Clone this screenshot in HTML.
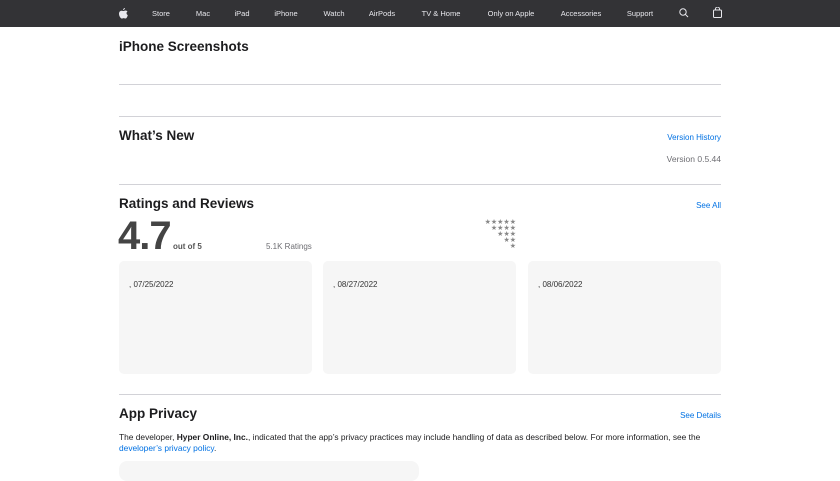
<!DOCTYPE html><html><head><style>
body{margin:0;width:840px;height:472px;overflow:hidden;background:#fff;font-family:"Liberation Sans",sans-serif;position:relative;color:#1d1d1f}
.a{position:absolute;white-space:nowrap}
.nav{position:absolute;left:0;top:0;width:840px;height:27px;background:#333336}
.n{position:absolute;top:9px;font-size:7.5px;color:#e8e8ed;transform:translateX(-50%)}
.hr{position:absolute;left:119px;width:602px;height:1px;background:#d2d2d7}
h2{position:absolute;margin:0;font-size:13.5px;font-weight:bold;left:119px}
.lk{color:#0071e3;font-size:8px}
.card{position:absolute;top:261px;width:193px;height:113px;background:#f6f6f6;border-radius:5px}
.card span{position:absolute;left:10px;top:19px;font-size:8px;color:#333}
</style></head><body>
<div class="nav">
<svg class="a" style="left:119px;top:8px" width="9" height="11" viewBox="0 0 9 11"><path d="M6 0c0 1-1 2-2 2 0-1 1-2 2-2zM4.5 3c.7 0 1.3-.5 2-.5s1.6.4 2 1c-1.5.9-1.2 3 .3 3.6C8.4 8.5 7.6 10.5 6.5 10.5c-.7 0-1-.4-1.8-.4s-1.1.4-1.8.4C1.6 10.5 0 8 0 5.7 0 3.8 1.2 2.7 2.4 2.7c.8 0 1.4.3 2.1.3z" fill="#e8e8ed"/></svg>
<span class="n" style="left:161px">Store</span><span class="n" style="left:203px">Mac</span><span class="n" style="left:242px">iPad</span><span class="n" style="left:286px">iPhone</span><span class="n" style="left:334px">Watch</span><span class="n" style="left:382px">AirPods</span><span class="n" style="left:441px">TV &amp; Home</span><span class="n" style="left:511px">Only on Apple</span><span class="n" style="left:581px">Accessories</span><span class="n" style="left:640px">Support</span>
<svg class="a" style="left:679px;top:8px" width="10" height="10" viewBox="0 0 10 10"><circle cx="4" cy="4" r="3.2" fill="none" stroke="#e8e8ed" stroke-width="1"/><path d="M6.3 6.3L9 9" stroke="#e8e8ed" stroke-width="1"/></svg>
<svg class="a" style="left:713px;top:7px" width="9" height="11" viewBox="0 0 9 11"><rect x=".5" y="3" width="8" height="7.5" rx="1" fill="none" stroke="#e8e8ed"/><path d="M2.5 3V2a2 2 0 014 0v1" fill="none" stroke="#e8e8ed"/></svg>
</div>
<h2 style="top:39px">iPhone Screenshots</h2>
<div class="hr" style="top:84px"></div>
<div class="hr" style="top:116px"></div>
<h2 style="top:128px">What’s New</h2>
<span class="a lk" style="right:119px;top:133px">Version History</span>
<span class="a" style="right:119px;top:154px;font-size:8.5px;color:#6e6e73">Version 0.5.44</span>
<div class="hr" style="top:184px"></div>
<h2 style="top:196px">Ratings and Reviews</h2>
<span class="a lk" style="right:119px;top:201px">See All</span>
<span class="a" style="left:118px;top:214px;font-size:40px;font-weight:bold;color:#444;letter-spacing:-1px">4.7</span>
<span class="a" style="left:173px;top:242px;font-size:8px;color:#555;font-weight:bold">out of 5</span>
<span class="a" style="left:266px;top:242px;font-size:8px;color:#6e6e73">5.1K Ratings</span>
<div class="a" style="right:324px;top:220px;font-size:7px;line-height:6px;color:#888;text-align:right">★★★★★<br>★★★★<br>★★★<br>★★<br>★</div>
<div class="card" style="left:119px"><span>, 07/25/2022</span></div>
<div class="card" style="left:323px"><span>, 08/27/2022</span></div>
<div class="card" style="left:528px"><span>, 08/06/2022</span></div>
<div class="hr" style="top:394px"></div>
<h2 style="top:406px">App Privacy</h2>
<span class="a lk" style="right:119px;top:411px">See Details</span>
<div class="a" style="left:119px;top:432px;font-size:8.4px;line-height:11px;color:#1d1d1f">The developer, <b>Hyper Online, Inc.</b>, indicated that the app’s privacy practices may include handling of data as described below. For more information, see the<br><span style="color:#0071e3">developer’s privacy policy</span>.</div>
<div class="a" style="left:119px;top:461px;width:300px;height:20px;background:#f6f6f6;border-radius:8px"></div>
</body></html>
